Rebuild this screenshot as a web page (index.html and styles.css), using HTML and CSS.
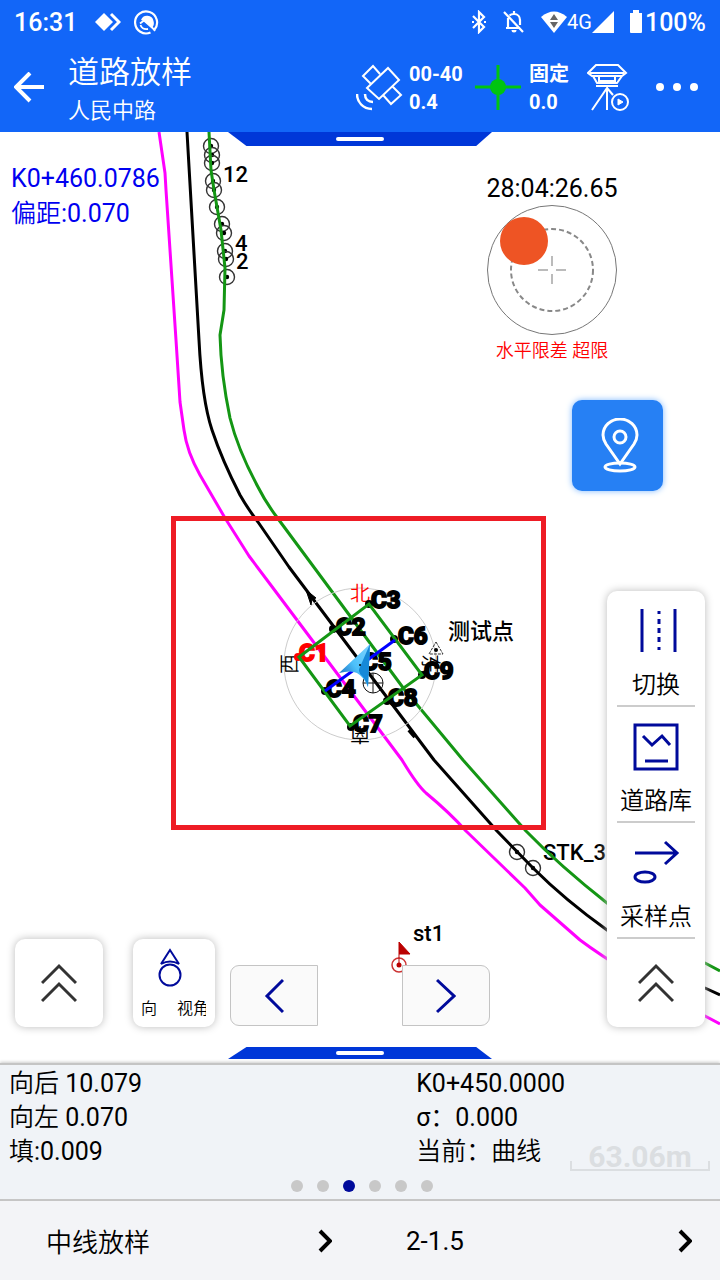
FILE: index.html
```html
<!DOCTYPE html>
<html lang="zh-CN">
<head>
<meta charset="utf-8">
<meta name="viewport" content="width=device-width, initial-scale=1">
<title>道路放样</title>
<link rel="stylesheet" href="styles.css">
</head>
<body>
<header class="header">
  <div class="status">
    <span class="clock">16:31</span>
    <svg class="status-diamond" width="26" height="20" viewBox="0 0 26 20"><path d="M9 1l9 9-9 9-9-9z" fill="#fff"/><path d="M16 2l8 8-8 8" fill="none" stroke="#fff" stroke-width="3"/></svg>
    <svg class="status-ring" width="26" height="26" viewBox="0 0 26 26"><path d="M20.500 20.500A11 11 0 1 0 16.500 23.500" fill="none" stroke="#fff" stroke-width="2.200"/><path d="M7 11a6.500 6.500 0 0 1 12.500 1c1 3 0 5-1.500 7L11 12.500z" fill="#fff"/><path d="M6.500 16c1 3 4 4.500 7.500 4M6 14.500l4-3 8.500 7.500 2.500 3" fill="none" stroke="#fff" stroke-width="1.800"/></svg>
    <div class="status-right">
      <svg width="16" height="24" viewBox="0 0 16 24"><path d="M2 6l11 11-5 5V2l5 5L2 18" fill="none" stroke="#fff" stroke-width="2.200"/><path d="M1 11h2v2H1zM13 11h2v2h-2z" fill="#fff"/></svg>
      <svg width="22" height="24" viewBox="0 0 22 24"><path d="M1 2l19 20M5 8v9M3 18h14M6.500 5.500C8 4 9 4 11 4c4 0 6 3 6 6v5M11 1v3" fill="none" stroke="#fff" stroke-width="2.200"/><path d="M8.500 20h5a2.500 2.500 0 0 1-5 0z" fill="#fff"/></svg>
      <div class="network">
        <svg width="26" height="22" viewBox="0 0 26 22"><path d="M0 6Q13-5 26 6L13 22z" fill="#fff"/><path d="M13 3l4 6H9zM13 17l4-6H9z" fill="#666"/></svg>
        <span>4G</span>
        <svg width="22" height="22" viewBox="0 0 22 22"><path d="M22 0v22H0z" fill="#fff"/></svg>
      </div>
      <div class="battery">
        <svg width="12" height="24" viewBox="0 0 12 24"><path d="M3 0h6v3h3v19q0 1-1 1H1q-1 0-1-1V3h3z" fill="#fff"/></svg>
        <span>100%</span>
      </div>
    </div>
  </div>
  <div class="appbar">
    <button class="icon-btn" aria-label="返回"><svg width="32" height="32" viewBox="0 0 32 32"><path d="M16 1L2 15l14 14M2 15h28" fill="none" stroke="#fff" stroke-width="4"/></svg></button>
    <div class="titles"><h1>道路放样</h1><p>人民中路</p></div>
    <svg class="satellite" width="48" height="48" viewBox="0 0 48 48" fill="none" stroke="#fff" stroke-width="2"><path d="M32 4l11 12-20 19-12-11zM24 10L17 2 7 12l8 8M36 22l9 9-10 9-8-9"/><path d="M1 30c0 8 6 15 15 15M9 30c0 5 3 8 8 8" stroke-width="2.500"/></svg>
    <div class="reading"><span>00-40</span><span>0.4</span></div>
    <svg class="fix" width="46" height="46" viewBox="0 0 46 46"><path d="M0 22h46M23 0v45" stroke="#00c410" stroke-width="3"/><circle cx="23" cy="22" r="8" fill="#00c410"/></svg>
    <div class="reading reading-fix"><span>固定</span><span>0.0</span></div>
    <button class="icon-btn receiver" aria-label="接收机"><svg width="44" height="48" viewBox="0 0 44 48" fill="none" stroke="#fff" stroke-width="2"><path d="M9 1h22l8 8-4 3H5L1 9zM3 9h34M6 12l4 7h20l5-7M12 12h16v5H12zM9 22h22M5 46l15-22v22M20 24l6 7"/><circle cx="33" cy="38" r="8"/><path d="M31 35l5 3-5 3z" fill="#fff" stroke-width="1"/></svg></button>
    <button class="icon-btn more" aria-label="更多"><svg width="44" height="12" viewBox="0 0 44 12" fill="#fff"><circle cx="5" cy="5" r="4"/><circle cx="22" cy="5" r="4"/><circle cx="39" cy="5" r="4"/></svg></button>
  </div>
</header>

<main class="map">
  <svg class="plan" viewBox="0 132 720 931" preserveAspectRatio="xMidYMid slice" role="img" aria-label="道路平面图">
    <defs>
      <g id="stake"><circle r="7.500" fill="none" stroke="#333" stroke-width="1.400"/><circle r="2.200"/></g>
      <linearGradient id="arrow" x1="0" y1="1" x2="1" y2="0"><stop offset="0" stop-color="#0a4fa8"/><stop offset="0.500" stop-color="#4cc0fa"/><stop offset="1" stop-color="#7fd4ff"/></linearGradient>
    </defs>
    <g class="point-text">
      <text x="223" y="182">12</text><text x="235" y="251">4</text><text x="236" y="269">2</text>
      <text x="543" y="860">STK_3</text><text x="413" y="941">st1</text>
      <text x="448" y="639">测试点</text>
    </g>
    <g>
      <use href="#stake" x="211" y="146"/><use href="#stake" x="212" y="155"/><use href="#stake" x="212" y="163"/>
      <use href="#stake" x="213" y="181"/><use href="#stake" x="214" y="190"/><use href="#stake" x="217" y="207"/>
      <use href="#stake" x="222" y="224"/><use href="#stake" x="224" y="233"/><use href="#stake" x="225" y="251"/>
      <use href="#stake" x="226" y="259"/><use href="#stake" x="227" y="277"/>
      <use href="#stake" x="517" y="852"/><use href="#stake" x="533" y="868"/>
    </g>
    <g fill="none" stroke-width="3" stroke-linejoin="round">
      <path stroke="#f0f" d="M159 132L165 173L166 190L170 250L176 340L180 402L184 430Q187 452 200 475L225 518L249 556L270 584L402 760Q417 785 426 793Q450 813 466 831L525 888L540 905L580 940Q620 970 705 1016L720 1024"/>
      <path stroke="#000" d="M187 132L199 340Q202 400 212 430T240 495Q248 509 258 522L289 567L434 760L497 831L533 868Q565 900 607 930T705 988L720 995"/>
      <path stroke="#149614" d="M209 132L211 170L214 190L217 207L221 230L225 268L224 310L220 335Q221 375 230 418Q238 450 258 487Q265 501 276 516L316 570L404 689L463 760L526 831Q560 866 607 903T705 963L720 971"/>
    </g>
    <path d="M306 590l10 8-4 1-1 6z" stroke="#000"/>
    <path d="M409 730l6 7" stroke="#000" stroke-width="4"/>
    <circle cx="360" cy="664" r="76" fill="none" stroke="#ccc"/>
    <g class="compass">
      <text x="360" y="601" fill="red">北</text>
      <text transform="translate(289 664) rotate(-90)" x="0" y="8">西</text>
      <text transform="translate(360 735) rotate(180)" x="0" y="8">南</text>
      <text transform="translate(431 664) rotate(90)" x="0" y="8">东</text>
    </g>
    <path d="M436 642l7 12h-14z" fill="none" stroke="#333" stroke-dasharray="3 1"/><circle cx="436" cy="650" r="2"/>
    <g fill="none" stroke="#111"><circle cx="373" cy="683" r="10"/><path d="M363 683h20M373 673v20"/></g>
    <g class="corner-text">
      <text x="336" y="635">C2</text><text x="371" y="608">C3</text><text x="326" y="697">C4</text>
      <text x="362" y="670">C5</text><text x="398" y="644">C6</text><text x="353" y="732">C7</text>
      <text x="388" y="706">C8</text><text x="424" y="679">C9</text><text class="current" x="299" y="661">C1</text>
    </g>
    <g><circle cx="333" cy="629" r="4"/><circle cx="369" cy="604" r="4"/><circle cx="325" cy="691" r="4"/><circle cx="394" cy="639" r="4"/><circle cx="351" cy="727" r="4"/><circle cx="387" cy="701" r="4"/><circle cx="422" cy="675" r="4"/><circle cx="298" cy="657" r="4" fill="red"/></g>
    <path d="M299 657L369 604L422 675L350 726z" fill="none" stroke="#149614" stroke-width="3"/>
    <path d="M325 691L395 640" stroke="#00f" stroke-width="3"/>
    <path d="M370 644L339 673Q351 670 357 673Q364 677 368 687z" fill="url(#arrow)"/>
    <path d="M370 644L360 667Q357 671 362 676Q366 680 368 687z" fill="#1689d8"/><circle cx="360" cy="665" r="1"/>
    <rect x="173.500" y="518.500" width="370" height="309" fill="none" stroke="#ee1c25" stroke-width="5"/>
    <g><circle cx="399" cy="965" r="7" fill="none" stroke="#c33" stroke-width="1.500"/><circle cx="399" cy="965" r="2.500" fill="#b00"/><path d="M399 965v-23l11 12h-11" fill="#b00" stroke="#b00"/></g>
  </svg>

  <button class="pull pull-top" aria-label="展开顶部"></button>
  <div class="offset"><div>K0+460.0786</div><div>偏距:0.070</div></div>

  <section class="bubble">
    <div class="bubble-time">28:04:26.65</div>
    <svg width="132" height="132" viewBox="0 0 132 132" fill="none" role="img" aria-label="水准气泡"><circle cx="66" cy="65" r="64.500" stroke="#777"/><circle cx="66" cy="65" r="41" stroke="#888" stroke-width="2" stroke-dasharray="5 3"/><path d="M52 65h10M70 65h10M66 51v10M66 69v10" stroke="#bbb" stroke-width="2"/><circle cx="38" cy="36" r="24" fill="#ee5424"/></svg>
    <div class="bubble-alert">水平限差 超限</div>
  </section>

  <button class="locate" aria-label="定位"><svg width="40" height="56" viewBox="0 0 40 56" fill="none" stroke="#fff" stroke-width="3"><path d="M20 46L6 26C3 21 3 18 3 17a17 16 0 0 1 34 0c0 4-1 6-3 9z"/><circle cx="20" cy="19" r="6"/><ellipse cx="20" cy="49" rx="15" ry="4"/></svg></button>

  <nav class="tools">
    <button class="tool"><svg width="50" height="50" viewBox="0 0 50 50" fill="none" stroke="#000a9b" stroke-width="3"><path d="M11 4v43M44 4v43"/><path d="M28 6v3M28 14v5M28 23v5M28 32v5M28 42v3"/></svg><span>切换</span></button>
    <button class="tool"><svg width="50" height="50" viewBox="0 0 50 50" fill="none" stroke="#000a9b" stroke-width="3"><rect x="4" y="4" width="42" height="44"/><path d="M12 15l9 9 10-9 8 9M14 40h23"/></svg><span>道路库</span></button>
    <button class="tool"><svg width="50" height="50" viewBox="0 0 50 50" fill="none" stroke="#000a9b" stroke-width="3"><path d="M4 16h42M34 5l12 11-12 11" /><ellipse cx="14" cy="40" rx="10" ry="5"/></svg><span>采样点</span></button>
    <button class="tool-up" aria-label="展开工具"><svg width="36" height="40" viewBox="0 0 36 40" fill="none" stroke="#333" stroke-width="3"><path d="M1 20L18 3l17 17M1 38l17-17 17 17"/></svg></button>
  </nav>

  <div class="controls">
    <button class="tile" aria-label="展开"><svg width="36" height="40" viewBox="0 0 36 40" fill="none" stroke="#333" stroke-width="3"><path d="M1 20L18 3l17 17M1 38l17-17 17 17"/></svg></button>
    <button class="tile view"><svg width="32" height="40" viewBox="0 0 32 40" fill="none" stroke="#000a9b" stroke-width="2"><path d="M12 2L3 16q9-5 18 0z"/><circle cx="12" cy="27" r="10.500"/></svg><span class="view-label"><span>向</span><span>视角</span></span></button>
    <button class="step prev" aria-label="上一个"><svg width="20" height="36" viewBox="0 0 20 36"><path d="M19 2L3 18l16 16" fill="none" stroke="#000a9b" stroke-width="3"/></svg></button>
    <button class="step next" aria-label="下一个"><svg width="20" height="36" viewBox="0 0 20 36"><path d="M1 2l17 16L1 34" fill="none" stroke="#000a9b" stroke-width="3"/></svg></button>
  </div>
  <button class="pull pull-bottom" aria-label="展开底部"></button>
</main>

<section class="info">
  <div class="info-grid">
    <div>向后 10.079</div><div>K0+450.0000</div>
    <div>向左 0.070</div><div>σ：0.000</div>
    <div>填:0.009</div><div>当前：曲线</div>
  </div>
  <div class="dots"><i></i><i></i><i class="on"></i><i></i><i></i><i></i></div>
  <div class="scale">63.06m</div>
</section>

<footer class="choices">
  <button><span>中线放样</span><svg width="14" height="24" viewBox="0 0 14 24"><path d="M2 2l10 10L2 22" fill="none" stroke="#000" stroke-width="4"/></svg></button>
  <button><span>2-1.5</span><svg width="14" height="24" viewBox="0 0 14 24"><path d="M2 2l10 10L2 22" fill="none" stroke="#000" stroke-width="4"/></svg></button>
</footer>
</body>
</html>
```
FILE: styles.css
```css
* { box-sizing: border-box; }
body {
  margin: 0;
  min-height: 100vh;
  display: flex;
  flex-direction: column;
  background: #fff;
  color: #000;
  font-family: Roboto, "Noto Sans CJK SC DemiLight", "Noto Sans CJK SC", sans-serif;
  font-size: 25px;
}
button {
  margin: 0;
  padding: 0;
  border: 0;
  background: none;
  color: inherit;
  font: inherit;
  cursor: pointer;
}
svg { display: block; flex: none; }

.header { background: #1266f8; color: #fff; }
.status { display: flex; align-items: center; height: 44px; padding: 0 14px; }
.clock { font-size: 25px; font-weight: 500; }
.status-diamond { margin-left: 18px; }
.status-ring { margin-left: 13px; }
.status-right { display: flex; align-items: center; gap: 16px; margin-left: auto; }
.network { display: flex; align-items: center; font-size: 20px; }
.battery { display: flex; align-items: center; gap: 3px; font-weight: 500; }

.appbar { display: flex; align-items: center; height: 88px; padding: 0 21px 0 14px; }
.titles { margin-left: 22px; padding-top: 3px; }
.titles h1 { margin: 0; font-size: 31px; font-weight: 400; line-height: 42px; }
.titles p { margin: 0; font-size: 22px; line-height: 33px; }
.satellite { margin-left: auto; }
.reading {
  display: flex;
  flex-direction: column;
  width: 64px;
  margin-left: 5px;
  font-family: Roboto, "Noto Sans CJK SC", sans-serif;
  font-size: 20px;
  font-weight: 700;
  line-height: 28px;
}
.fix { margin-left: 2px; }
.reading-fix { width: 52px; margin-left: 8px; }
.receiver { margin-left: 6px; }
.more { margin-left: 24px; }

.map { position: relative; flex: 1 0 931px; overflow: hidden; }
.plan { position: absolute; inset: 0; width: 100%; height: 100%; }
.point-text { font-family: Roboto, "Noto Sans CJK SC", sans-serif; font-size: 22px; font-weight: 500; }
.compass { font-size: 20px; text-anchor: middle; }
.corner-text { font-size: 24px; font-weight: 700; stroke: #000; stroke-width: 2px; }
.corner-text .current { fill: red; stroke: red; }

.pull {
  position: absolute;
  left: 50%;
  width: 264px;
  height: 14px;
  margin-left: -132px;
  background: #0037d8;
}
.pull::after {
  content: "";
  display: block;
  width: 48px;
  height: 4px;
  margin: 0 auto;
  border-radius: 2px;
  background: #fff;
}
.pull-top { top: 0; clip-path: polygon(0 0, 100% 0, 94% 100%, 7% 100%); }
.pull-bottom { bottom: 4px; height: 12px; clip-path: polygon(7% 0, 94% 0, 100% 100%, 0 100%); }

.offset { position: absolute; left: 11px; top: 29px; color: #0000f0; line-height: 35px; }

.bubble {
  position: absolute;
  right: 102px;
  top: 41px;
  display: flex;
  flex-direction: column;
  align-items: center;
}
.bubble-time { line-height: 32px; }
.bubble-alert { color: #f00; font-size: 18px; line-height: 28px; }

.locate {
  position: absolute;
  right: 57px;
  top: 268px;
  width: 91px;
  height: 91px;
  padding-left: 4px;
  display: flex;
  align-items: center;
  justify-content: center;
  border-radius: 10px;
  background: #2680f4;
  box-shadow: 0 0 6px #7db8ff;
}

.tools {
  position: absolute;
  right: 15px;
  bottom: 36px;
  width: 98px;
  padding: 0 10px;
  display: flex;
  flex-direction: column;
  border-radius: 10px;
  background: #fff;
  box-shadow: 0 0 8px #bbb;
}
.tool {
  height: 116px;
  padding-top: 14px;
  display: flex;
  flex-direction: column;
  align-items: center;
  border-bottom: 2px solid #ccc;
  font-size: 24px;
}
.tool span { margin-top: 13px; line-height: 34px; white-space: nowrap; }
.tool-up { height: 88px; display: flex; align-items: center; justify-content: center; }

.controls {
  position: absolute;
  left: 15px;
  bottom: 36px;
  display: flex;
  align-items: flex-end;
}
.tile {
  width: 88px;
  height: 88px;
  display: flex;
  flex-direction: column;
  align-items: center;
  justify-content: center;
  border-radius: 10px;
  background: #fff;
  box-shadow: 0 0 8px #bbb;
}
.view { width: 82px; margin-left: 30px; padding: 4px 9px 0 8px; }
.view-label {
  display: flex;
  gap: 20px;
  width: 100%;
  margin-top: 8px;
  overflow: hidden;
  font-size: 16px;
  line-height: 26px;
  white-space: nowrap;
}
.step {
  width: 88px;
  height: 61px;
  margin-bottom: 1px;
  display: flex;
  align-items: center;
  justify-content: center;
  border: 1px solid #c4c4c4;
  background: #fafafa;
}
.prev { margin-left: 15px; border-radius: 9px 0 0 9px; }
.next { margin-left: 84px; border-radius: 0 9px 9px 0; }

.info {
  position: relative;
  padding: 2px 9px 7px;
  border-top: 2px solid #c4c4c4;
  background: #f0f3f7;
  box-shadow: 0 -1px 3px #ccc;
}
.info-grid { display: grid; grid-template-columns: 58% 42%; line-height: 34px; }
.dots { display: flex; justify-content: center; gap: 14px; margin-top: 11px; padding-left: 4px; }
.dots i { width: 12px; height: 12px; border-radius: 50%; background: #c8c8c8; }
.dots .on { background: #000a9b; }
.scale {
  position: absolute;
  right: 10px;
  bottom: 28px;
  width: 140px;
  color: #dbdee1;
  font-size: 30px;
  font-weight: 700;
  line-height: 28px;
  text-align: center;
}
.scale::after {
  content: "";
  position: absolute;
  inset: auto 0 0;
  height: 8px;
  border: 2px solid #dbdee1;
  border-top: 0;
}

.choices { display: grid; grid-template-columns: 1fr 1fr; border-top: 2px solid #c4c4c4; background: #f3f4f7; }
.choices button {
  display: flex;
  align-items: center;
  justify-content: space-between;
  height: 79px;
  padding: 0 28px 0 46px;
  font-size: 26px;
}
```
